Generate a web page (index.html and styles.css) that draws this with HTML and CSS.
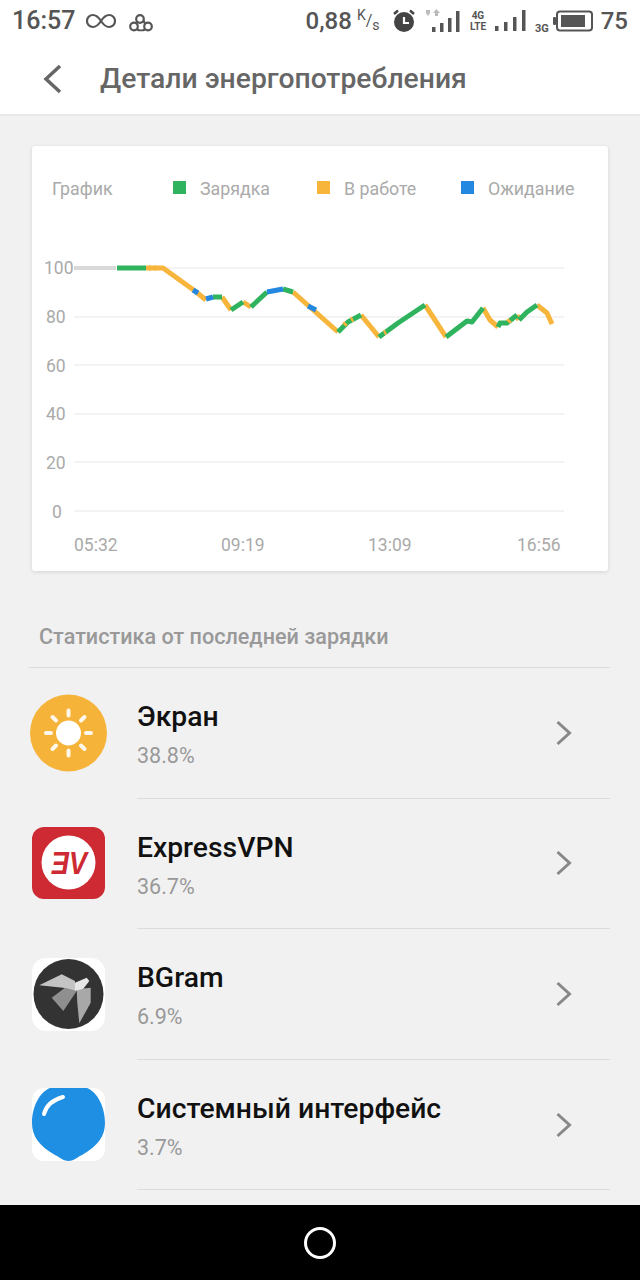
FILE: index.html
```html
<!DOCTYPE html>
<html lang="ru">
<head>
    <meta charset="UTF-8">
    <meta name="viewport" content="width=device-width, initial-scale=1.0">
    <title>Детали энергопотребления</title>

    <link rel="stylesheet" href="styles.css">
</head>
<body>
    <div class="top">
        <div class="status">
            <span class="time">16:57</span>
            <svg class="ic-inf" width="30" height="16" viewBox="0 0 30 16"><path d="M15 8C12 3.500 10 2 7 2 3.500 2 1 4.700 1 8s2.500 6 6 6c3 0 5-1.500 8-6s5-6 8-6c3.500 0 6 2.700 6 6s-2.500 6-6 6c-3 0-5-1.500-8-6z" fill="none" stroke="#555" stroke-width="2.200"/></svg>
            <svg class="ic-clu" width="24" height="18" viewBox="0 0 24 18"><g fill="none" stroke="#555" stroke-width="2.200"><circle cx="11" cy="5" r="3.800"/><circle cx="5" cy="12.500" r="3.800"/><circle cx="19" cy="12.500" r="3.800"/><path d="M8 15.500c2 1 6 1 8 0M8.500 8c-.5 1-1 1.500-1.500 1.500M14.500 6.500c.5 2 1.500 3 2 3.500"/></g></svg>
            <span class="spacer"></span>
            <span class="speed">0,88</span>
            <span class="unit"><sup>K</sup>/<sub>s</sub></span>
            <svg class="ic-alarm" width="24" height="24" viewBox="0 0 24 24"><circle cx="12" cy="13" r="10" fill="#444"/><path d="M2 5l4-3.500M22 5l-4-3.500" stroke="#444" stroke-width="2.500"/><path d="M12 8v6h5" fill="none" stroke="#fff" stroke-width="2.200"/></svg>
            <svg class="ic-sig1" width="40" height="24" viewBox="0 0 40 24"><g fill="#bbb"><path d="M2 1h4v3l-2 3-2-3zM11 7h3V4h2l-3.500-4L9 4h2z"/></g><g fill="#555"><rect x="8" y="18" width="3.500" height="5"/><rect x="16" y="14" width="3.500" height="9"/><rect x="24" y="9" width="3.500" height="14"/><rect x="32" y="2" width="3.500" height="21"/></g></svg>
            <span class="net"><b>4G</b><b>LTE</b></span>
            <svg class="ic-sig2" width="33" height="22" viewBox="0 0 33 22"><g fill="#555"><rect x="0" y="16" width="3.500" height="5"/><rect x="9" y="12" width="3.500" height="9"/><rect x="18" y="7" width="3.500" height="14"/><rect x="27" y="0" width="3.500" height="21"/></g></svg>
            <span class="net3g">3G</span>
            <svg class="ic-bat" width="40" height="22" viewBox="0 0 40 22"><rect x="4" y="1.500" width="35" height="19" rx="3" fill="none" stroke="#555" stroke-width="2"/><rect x="8" y="5" width="24" height="12" fill="#555"/><rect x="0" y="7" width="3" height="8" rx="1" fill="#555"/></svg>
            <span class="level">75</span>
        </div>
        <div class="bar">
            <svg class="back" width="20" height="30" viewBox="0 0 20 30"><path d="M18 2L4 15l14 13" fill="none" stroke="#666" stroke-width="3.500"/></svg>
            <h1>Детали энергопотребления</h1>
        </div>
    </div>

    <main>
        <section class="card">
            <div class="legend">
                <span class="legend-title">График</span>
                <span class="key key-charge">Зарядка</span>
                <span class="key key-work">В работе</span>
                <span class="key key-idle">Ожидание</span>
            </div>
            <svg class="chart" width="576" height="350" viewBox="32 221 576 350">
                <g stroke="#f0f0f0" stroke-width="1.500">
                    <path d="M74 268H564M74 317H564M74 365H564M74 414H564M74 462H564M74 511H564"/>
                </g>
                <g class="ticks">
                    <text x="44" y="274">100</text>
                    <text x="46" y="323">80</text>
                    <text x="46" y="372">60</text>
                    <text x="46" y="420">40</text>
                    <text x="46" y="469">20</text>
                    <text x="52" y="518">0</text>
                    <text x="74" y="551">05:32</text>
                    <text x="221" y="551">09:19</text>
                    <text x="368" y="551">13:09</text>
                    <text x="517" y="551">16:56</text>
                </g>
                <path d="M74 268H116" stroke="#d9d9d9" stroke-width="4" fill="none"/>
                <g class="line-work">
                    <path d="M146 268H163L195 291 206 300"/>
                    <path d="M222 297L231 310"/>
                    <path d="M243 302L251 307"/>
                    <path d="M293 292L338 332"/>
                    <path d="M361 315L379 337"/>
                    <path d="M425 305L433 317 446 337"/>
                    <path d="M483 308L490 320 498 327"/>
                    <path d="M517 315L519 320"/>
                    <path d="M537 305L547 313 552 324"/>
                </g>
                <g class="line-charge">
                    <path d="M117 268H146"/>
                    <path d="M213 297L222 297"/>
                    <path d="M231 310L243 302"/>
                    <path d="M251 307L267 292"/>
                    <path d="M283 289L293 292"/>
                    <path d="M338 332L348 322 361 315"/>
                    <path d="M379 337L398 323 425 305"/>
                    <path d="M446 337L467 321 472 322 483 308"/>
                    <path d="M498 327L500 323 507 323 517 315"/>
                    <path d="M519 320L527 312 537 305"/>
                </g>
                <g class="line-idle">
                    <path d="M193 290L198 293"/>
                    <path d="M206 299L213 297"/>
                    <path d="M267 292L283 289"/>
                    <path d="M308 306L316 310"/>
                </g>
                <g class="line-work">
                    <path d="M149 268H151M154 268H156M344 325L346 323M351 320L353 319M384 333L386 332M508 322L510 320"/>
                </g>
            </svg>
        </section>

        <h2>Статистика от последней зарядки</h2>

        <ul class="list">
            <li class="row">
                <svg class="app" width="78" height="78" viewBox="0 0 78 78"><circle cx="38.500" cy="39" r="38.500" fill="#f6b33a"/><circle cx="38.500" cy="39" r="12.500" fill="#fff"/><path d="M38.500 16.500v5M38.500 56.500v5M16 39h5M56 39h5M22.500 23l3.500 3.500M51 51.500l3.500 3.500M22.500 55l3.500-3.500M51 26.500L54.500 23" stroke="#fff" stroke-width="4" stroke-linecap="round" opacity=".9"/></svg>
                <div class="info">
                    <div class="text"><div class="name">Экран</div><div class="pct">38.8%</div></div>
                    <svg class="chev" width="18" height="26" viewBox="0 0 18 26"><path d="M2.500 2l12 11-12 11" fill="none" stroke="#888" stroke-width="3"/></svg>
                </div>
            </li>
            <li class="row">
                <svg class="app" width="78" height="78" viewBox="0 0 78 78"><rect x="2" y="3" width="73" height="72" rx="12" fill="#cd2a33"/><circle cx="38.500" cy="38.500" r="27" fill="#fff"/><text class="ev" x="21" y="50" textLength="36" lengthAdjust="spacingAndGlyphs">ƎV</text></svg>
                <div class="info">
                    <div class="text"><div class="name">ExpressVPN</div><div class="pct">36.7%</div></div>
                    <svg class="chev" width="18" height="26" viewBox="0 0 18 26"><path d="M2.500 2l12 11-12 11" fill="none" stroke="#888" stroke-width="3"/></svg>
                </div>
            </li>
            <li class="row">
                <svg class="app" width="78" height="78" viewBox="0 0 78 78"><rect x="2" y="3" width="73" height="73" rx="14" fill="#fff"/><circle cx="38.500" cy="39" r="35" fill="#333"/><path d="M9.300 30.300L31.700 19.300 45 26V36L33 32.700z" fill="#c4c4c4"/><path d="M21.700 42.700L35 32.700 46.700 36 33.300 56z" fill="#8f8f8f"/><path d="M46.700 34.300L60.700 32.700V47.700L49.300 68.300 47.300 47.700z" fill="#a8a8a8"/><path d="M45 27.700L56.700 22.700 59.300 26 53.300 33.700 45 36z" fill="#e6e6e6"/></svg>
                <div class="info">
                    <div class="text"><div class="name">BGram</div><div class="pct">6.9%</div></div>
                    <svg class="chev" width="18" height="26" viewBox="0 0 18 26"><path d="M2.500 2l12 11-12 11" fill="none" stroke="#888" stroke-width="3"/></svg>
                </div>
            </li>
            <li class="row">
                <svg class="app" width="78" height="78" viewBox="0 0 78 78"><rect x="2" y="2" width="73" height="73" rx="12" fill="#fff"/><path d="M20 2H57C67 6 75 20 75 37 75 50 68 60 52 69 46 72 43 75 38.500 75 34 75 31 72 25 69 9 60 2 50 2 37 2 20 10 6 20 2z" fill="#1f8fe3"/><path d="M14 28C16 20 22 14 33 11" fill="none" stroke="#fff" stroke-width="4" stroke-linecap="round"/></svg>
                <div class="info">
                    <div class="text"><div class="name">Системный интерфейс</div><div class="pct">3.7%</div></div>
                    <svg class="chev" width="18" height="26" viewBox="0 0 18 26"><path d="M2.500 2l12 11-12 11" fill="none" stroke="#888" stroke-width="3"/></svg>
                </div>
            </li>
        </ul>
    </main>

    <footer class="nav"><span class="home"></span></footer>
</body>
</html>
```

FILE: styles.css
```css
* {
    margin: 0;
    padding: 0;
    box-sizing: border-box;
}
body {
    width: 640px;
    height: 1280px;
    overflow: hidden;
    display: flex;
    flex-direction: column;
    background-color: #f1f1f1;
    font-family: Roboto, "Liberation Sans", sans-serif;
}
.top {
    height: 116px;
    background-color: #fff;
    border-bottom: 2px solid #e8e8e8;
}
.status {
    height: 41px;
    padding: 0 12px;
    display: flex;
    align-items: center;
    color: #555;
}
.time {
    font-size: 25px;
    font-weight: 500;
}
.ic-inf {
    margin-left: 11px;
}
.ic-clu {
    margin: 4px 0 0 13px;
}
.spacer {
    flex: 1;
}
.speed {
    font-size: 24px;
    font-weight: 500;
}
.unit {
    width: 24px;
    margin-left: 5px;
    font-size: 16px;
    line-height: 1;
    white-space: nowrap;
}
.unit sup, .unit sub {
    font-size: 14px;
    line-height: 0;
}
.ic-alarm {
    margin-left: 11px;
}
.ic-sig1 {
    margin-left: 8px;
}
.net {
    display: flex;
    flex-direction: column;
    margin-left: 6px;
    font-size: 10px;
    line-height: 11px;
    text-align: center;
    width: 16px;
}
.ic-sig2 {
    margin-left: 9px;
}
.net3g {
    align-self: flex-end;
    margin: 0 0 6px 7px;
    font-size: 11px;
    font-weight: 700;
}
.ic-bat {
    margin-left: 4px;
}
.level {
    margin-left: 8px;
    font-size: 24px;
    font-weight: 500;
}
.bar {
    height: 73px;
    padding: 2px 0 0 42px;
    display: flex;
    align-items: center;
}
h1 {
    margin-left: 38px;
    font-size: 28.300px;
    font-weight: 500;
    color: #666;
    white-space: nowrap;
}
main {
    flex: 1;
}
.card {
    width: 576px;
    height: 425px;
    margin: 30px 0 0 32px;
    background-color: #fff;
    border-radius: 3px;
    box-shadow: 0 1px 4px rgba(0, 0, 0, 0.12);
}
.legend {
    height: 75px;
    padding: 32px 0 0 20px;
    display: flex;
    align-items: flex-start;
    font-size: 17.800px;
    line-height: 22px;
    color: #aaa;
}
.legend-title {
    width: 121px;
}
.key {
    display: flex;
    align-items: center;
    width: 144px;
}
.key::before {
    content: "";
    width: 13px;
    height: 13px;
    margin: -4px 14px 0 0;
}
.key-charge::before {
    background-color: #2fb35f;
}
.key-work::before {
    background-color: #f7b53c;
}
.key-idle::before {
    background-color: #2488e0;
}
.chart {
    display: block;
}
.ticks {
    font-size: 17.500px;
    fill: #aaa;
}
.line-work, .line-charge, .line-idle {
    fill: none;
    stroke-width: 5;
    stroke-linejoin: round;
}
.line-work {
    stroke: #f7b53c;
}
.line-charge {
    stroke: #2fb35f;
}
.line-idle {
    stroke: #2488e0;
}
h2 {
    height: 97px;
    margin-left: 28px;
    width: 582px;
    padding: 54px 0 0 11px;
    border-bottom: 1px solid #dcdcdc;
    font-size: 21.600px;
    line-height: 24px;
    font-weight: 500;
    color: #999;
    white-space: nowrap;
}
.list {
    list-style: none;
}
.row {
    height: 130.600px;
    padding: 0 30px;
    display: flex;
    align-items: center;
    gap: 29px;
}
.row .app {
    flex: none;
    margin-bottom: 1px;
}
.info {
    flex: 1;
    height: 100%;
    display: flex;
    align-items: center;
    justify-content: space-between;
    padding-right: 37px;
    border-bottom: 1px solid #dcdcdc;
}
.text {
    padding-top: 4px;
}
.name {
    font-size: 28.300px;
    line-height: 34px;
    font-weight: 500;
    color: #111;
}
.pct {
    margin-top: 9px;
    font-size: 21.500px;
    line-height: 26px;
    color: #999;
}
.ev {
    font-family: "Liberation Sans", sans-serif;
    font-size: 31px;
    font-weight: 700;
    font-style: italic;
    fill: #cd2a33;
}
.nav {
    height: 75px;
    background-color: #000;
    display: flex;
    justify-content: center;
    align-items: center;
}
.home {
    width: 32px;
    height: 32px;
    border: 3px solid #fff;
    border-radius: 50%;
}
```
